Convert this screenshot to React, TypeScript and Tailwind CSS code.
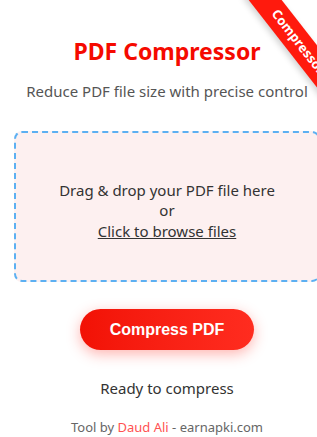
export default function App() {
  return (
    <div className="relative w-[317px] h-[437px] overflow-hidden bg-white font-['Noto_Sans',sans-serif]">
      {/* corner ribbon */}
      <div className="absolute left-[228px] top-[29px] w-[140px] h-[26px] rotate-[52deg] bg-[#ff1a0d] shadow-[0_3px_6px_rgba(0,0,0,0.18)] flex items-center justify-center">
        <span className="text-white text-[13px] font-bold">Compressor</span>
      </div>

      <div className="w-[334px] px-[14px] flex flex-col items-center">
        <h1 className="mt-[35px] text-[23px] leading-[32px] font-bold text-[#f50a00]">PDF Compressor</h1>
        <p className="mt-[13px] text-[15px] leading-[22px] text-[#555]">Reduce PDF file size with precise control</p>

        <div className="mt-[29px] w-full h-[151px] pt-[8px] rounded-[8px] border-2 border-dashed border-[#5cb0f2] bg-[#fdf0f0] flex flex-col items-center justify-center text-[15px] leading-[20.5px] text-[#333]">
          <span>Drag &amp; drop your PDF file here</span>
          <span>or</span>
          <span className="underline">Click to browse files</span>
        </div>

        <button className="mt-[27px] w-[174px] h-[41px] rounded-full bg-gradient-to-r from-[#f21105] to-[#ff2c1f] text-white text-[16px] font-bold font-['Liberation_Sans',sans-serif] shadow-[0_4px_14px_rgba(255,40,30,0.35)]">
          Compress PDF
        </button>

        <p className="mt-[27px] text-[15px] leading-[22px] text-[#333]">Ready to compress</p>

        <p className="mt-[19px] text-[13px] leading-[18px] text-[#666]">
          Tool by <span className="text-[#ff5252]">Daud Ali</span> - earnapki.com
        </p>
      </div>
    </div>
  );
}
